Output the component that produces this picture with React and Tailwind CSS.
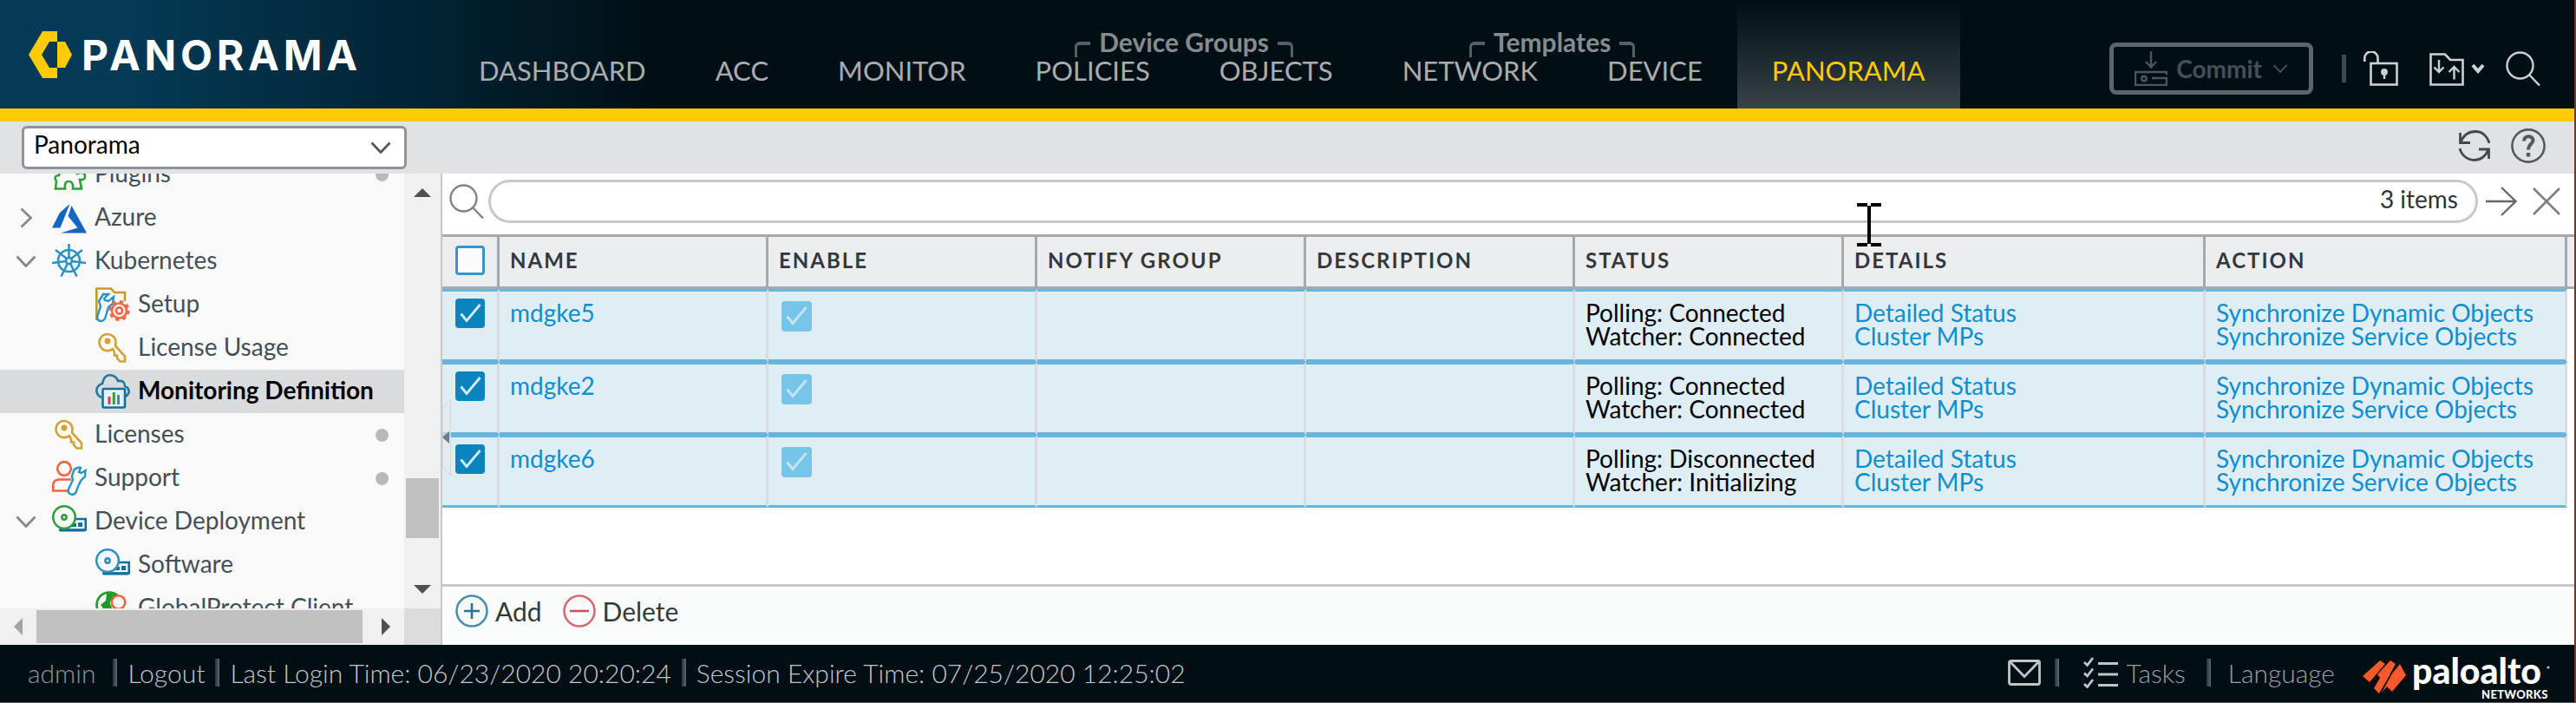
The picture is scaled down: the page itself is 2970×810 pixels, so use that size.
import React from "react";

/* ---------- icons: header ---------- */

function PanoramaMark() {
  return (
    <svg viewBox="0 0 50 56" className="h-14 w-[50px]" aria-hidden="true">
      <path d="M16 1H33V13H24L15 28L24 43H33V55H16L0 28Z" fill="#ffcb06" />
      <path d="M33 13H42L50 28L42 43H33Z" fill="#ffcb06" />
    </svg>
  );
}

function CommitIcon() {
  return (
    <svg viewBox="0 0 38 40" className="h-10 w-[38px]" fill="none" stroke="#4c575c" strokeWidth="2.4" aria-hidden="true">
      <path d="M19 0V18M13 12L19 18.500L25 12" />
      <path d="M37 27V24H1V39H37V31H20" />
      <circle cx="11" cy="31.500" r="2.800" />
    </svg>
  );
}

function UnlockIcon() {
  return (
    <svg viewBox="0 0 40 40" className="size-10" fill="none" stroke="#ccd1d3" strokeWidth="2.600" aria-hidden="true">
      <path d="M1.300 12V8A7.500 7.500 0 0 1 16.500 8V13" />
      <rect x="8.500" y="14" width="30" height="24.500" />
      <circle cx="24" cy="24" r="2.600" fill="#ccd1d3" />
      <path d="M24 25V32" strokeWidth="2.400" />
    </svg>
  );
}

function ConfigFolderIcon() {
  return (
    <svg viewBox="0 0 40 40" className="size-10" fill="none" stroke="#ccd1d3" strokeWidth="2.600" aria-hidden="true">
      <path d="M1.500 3.500H18L24 10H38.500V38.500H1.500Z" />
      <path d="M11 10V24M5.500 18.500L11 24L16.500 18.500M28.500 32.500V18M22.500 24L28.500 18L34.500 24" strokeWidth="2.400" />
    </svg>
  );
}

function SmallCaret() {
  return (
    <svg viewBox="0 0 16 12" className="h-3 w-4" fill="none" stroke="#ccd1d3" strokeWidth="4" aria-hidden="true">
      <path d="M2 2L8 9L14 2" />
    </svg>
  );
}

function SearchIcon({ light }) {
  return (
    <svg viewBox="0 0 40 40" className="size-10 shrink-0" fill="none" stroke={light ? "#ccd1d3" : "#7c858b"} strokeWidth="2.400" aria-hidden="true">
      <circle cx="16.500" cy="16.500" r="15" />
      <path d="M27 27L39 39.500" />
    </svg>
  );
}

function Chevron({ className, dir = "down" }) {
  const d = dir === "down" ? "M1.500 1.500L12 12.500L22.500 1.500" : "M1.500 1.500L12.500 12L1.500 22.500";
  return (
    <svg viewBox={dir === "down" ? "0 0 24 14" : "0 0 14 24"} className={className} fill="none" stroke="currentColor" strokeWidth="2.800" aria-hidden="true">
      <path d={d} />
    </svg>
  );
}

function RefreshIcon() {
  return (
    <svg viewBox="0 0 36 36" className="size-9" fill="none" stroke="#44484b" strokeWidth="2.800" aria-hidden="true">
      <path d="M1.500 3V14.500H13M2 13.500C6 4.500 13 1.500 19 1.500C27 1.500 33 7 35 15" />
      <path d="M34.500 33V22H23M34 23C30 31 24 34.500 18 34.500C10 34.500 3 29 1 21" />
    </svg>
  );
}

function HelpIcon() {
  return (
    <svg viewBox="0 0 40 40" className="size-10" fill="none" stroke="#55595c" aria-hidden="true">
      <circle cx="20" cy="20" r="18.600" strokeWidth="2.600" />
      <path d="M15 14.500C15 7.500 25.500 8 25.500 13.500C25.500 17.500 20 18 20 24.500" strokeWidth="4" />
      <path d="M20 28V32.500" strokeWidth="4.500" />
    </svg>
  );
}

/* ---------- icons: navigation tree ---------- */

function TreeSvg({ children }) {
  return (
    <svg viewBox="0 0 40 40" className="size-10 shrink-0" fill="none" strokeWidth="2.600" aria-hidden="true">
      {children}
    </svg>
  );
}

const Wrench = ({ x = 0, y = 0 }) => (
  <g transform={`translate(${x} ${y})`} stroke="#2b93c4" strokeWidth="2.400" fill="#f9f9f9">
    <path d="M8 1L3 9L5 15L1 27Q1 32 6 32Q10 31 11 26L14 16L19 12L20 4L14 9L10 8L9 6L14 1Z" />
  </g>
);

const DiscAndDevice = ({ color }) => (
  <>
    <path d="M8 29.500H38.700V17H27" stroke="#11719c" />
    <rect x="30" y="21" width="5" height="5" fill="#11719c" />
    <path d="M9 30H38" stroke="#11719c" strokeWidth="3" />
    <path d="M22 24H28" stroke="#11719c" strokeWidth="4" />
    <circle cx="14" cy="15" r="12.800" stroke={color} fill="#f9f9f9" />
    <circle cx="14" cy="15" r="2.600" stroke={color} />
  </>
);

const icons = {
  plugins: (
    <TreeSvg>
      <path d="M10 12H15Q13 4 19 4Q25 4 23 12H29V19Q38 16 38 22Q38 27 32 26L34 36.500H24Q25 28 19 28Q14 28 15 36.500H4L5 28Q1 22 8 21Z" stroke="#2ea03a" />
    </TreeSvg>
  ),
  azure: (
    <TreeSvg>
      <path d="M20.500 4L9 14L0 31.500H9.500Z" fill="#1565c5" />
      <path d="M22.500 6L18.500 18L29.500 31.500L10 37.500H40Z" fill="#1565c5" />
    </TreeSvg>
  ),
  kubernetes: (
    <TreeSvg>
      <g stroke="#2b93c4">
        <circle cx="19.500" cy="19.500" r="12.500" />
        <circle cx="19.500" cy="19.500" r="3.500" />
        <path d="M19.500 0V16M17 17L4 7M22 17L35 7M16 20L0 22M23 20L39 22M18 22.500L10.500 37.500M21 22.500L28.500 37.500" />
      </g>
    </TreeSvg>
  ),
  setup: (
    <TreeSvg>
      <path d="M1.300 38V1.500H18L22 6H34V16" stroke="#c9982b" />
      <Wrench x={1} y={7} />
      <circle cx="27.500" cy="27" r="10.600" stroke="#f0694a" strokeWidth="3" strokeDasharray="4.300 4.020" />
      <circle cx="27.500" cy="27" r="8.500" stroke="#f0694a" fill="#f9f9f9" />
      <circle cx="27.500" cy="27" r="3.600" stroke="#f0694a" />
    </TreeSvg>
  ),
  key: (
    <TreeSvg>
      <path d="M20.500 20.500A9.500 9.500 0 1 1 23.500 14L23 17.500L34 29.500V35.500H28.500L25 31.500V28.500H22V25.500L20 20.500" stroke="#d0a233" />
      <circle cx="14" cy="12" r="3.400" fill="#d0a233" />
      <path d="M12 14L16.500 10" stroke="#d0a233" />
    </TreeSvg>
  ),
  monitoring: (
    <TreeSvg>
      <path d="M7 27Q1 24 1.300 18Q3 12 8 11Q10 1 17 1.300Q24 2 26 8Q34 7 34 14Q39 16 38.700 21Q37 25 34 26" stroke="#1c7aa3" />
      <rect x="8.500" y="17" width="25.500" height="21.500" rx="1.500" stroke="#11719c" fill="#e8f0f4" />
      <path d="M16 26V35" stroke="#cf3f52" strokeWidth="3" />
      <path d="M21.300 21V35" stroke="#2ea03a" strokeWidth="3" />
      <path d="M26.500 24V35" stroke="#2b93c4" strokeWidth="3" />
    </TreeSvg>
  ),
  support: (
    <TreeSvg>
      <circle cx="14" cy="9" r="7.800" stroke="#f0623f" />
      <path d="M22 21.500H8Q1.300 22 1.300 28V34.500H20" stroke="#f0623f" />
      <path d="M25 11L23 18L24 22L18.500 34Q19 39 24 38.700Q28 38 29 32L33 23L38 18L38.500 11L34 14L31 13L33 8Q28 7 25 11Z" fill="#f9f9f9" stroke="#2b93c4" strokeWidth="2.400" />
    </TreeSvg>
  ),
  deployment: (
    <TreeSvg>
      <DiscAndDevice color="#2ea03a" />
    </TreeSvg>
  ),
  software: (
    <TreeSvg>
      <DiscAndDevice color="#2b93c4" />
    </TreeSvg>
  ),
  globalprotect: (
    <TreeSvg>
      <circle cx="16" cy="16" r="14.500" stroke="#1d9a2c" />
      <path d="M13 2L25 4L22 9L17 12V17L9 20L6 16L12 11Z" fill="#1d9a2c" />
      <path d="M8 18L18 16L20 24H10Z" fill="#1d9a2c" />
      <circle cx="26.500" cy="13" r="7.800" stroke="#f0623f" fill="#f9f9f9" />
    </TreeSvg>
  ),
};

const tree = [
  { label: "Plugins", icon: "plugins", dot: true },
  { label: "Azure", icon: "azure", arrow: "right" },
  { label: "Kubernetes", icon: "kubernetes", arrow: "down" },
  { label: "Setup", icon: "setup", child: true },
  { label: "License Usage", icon: "key", child: true },
  { label: "Monitoring Definition", icon: "monitoring", child: true, selected: true },
  { label: "Licenses", icon: "key", dot: true },
  { label: "Support", icon: "support", dot: true },
  { label: "Device Deployment", icon: "deployment", arrow: "down" },
  { label: "Software", icon: "software", child: true },
  { label: "GlobalProtect Client", icon: "globalprotect", child: true },
];

function TreeItem({ item }) {
  return (
    <li className={item.selected ? "bg-[#dadbdd]" : ""}>
      <a href="#" className="flex h-[50px] items-center pr-[18px] text-[28px] leading-[34px] whitespace-nowrap">
        <span className="flex w-[60px] shrink-0 justify-center text-[#85898c]">
          {item.arrow === "down" && <Chevron className="h-[14px] w-6" />}
          {item.arrow === "right" && <Chevron dir="right" className="h-6 w-[14px]" />}
        </span>
        {item.child && <span className="w-[50px] shrink-0" />}
        {icons[item.icon]}
        <span className={item.selected ? "pb-1 pl-[9px] font-bold text-black" : "pb-1 pl-[9px] text-[#454f58]"}>{item.label}</span>
        {item.dot && <span className="ml-auto size-[15px] rounded-full bg-[#b9b9b9]" />}
      </a>
    </li>
  );
}

function Sidebar() {
  return (
    <aside className="flex w-[510px] shrink-0 flex-col border-r-2 border-[#c5c9cc] bg-[#f0f0f0]">
      <div className="flex min-h-0 flex-1">
        <nav aria-label="Configuration" className="min-w-0 flex-1 overflow-hidden bg-[#f9f9f9]">
          <ul className="-mt-6">
            {tree.map((item) => (
              <TreeItem key={item.label} item={item} />
            ))}
          </ul>
        </nav>
        <div className="flex w-[42px] flex-col items-center justify-between py-[17px]">
          <svg viewBox="0 0 20 10" className="h-2.5 w-5" aria-hidden="true"><path d="M0 10L10 0L20 10Z" fill="#505050" /></svg>
          <div className="mt-auto mb-[54px] h-[69px] w-[38px] bg-[#c1c1c1]" />
          <svg viewBox="0 0 20 10" className="h-2.5 w-5" aria-hidden="true"><path d="M0 0L10 10L20 0Z" fill="#505050" /></svg>
        </div>
      </div>
      <div className="flex h-[42px]">
        <div className="flex min-w-0 flex-1 items-center px-4">
          <svg viewBox="0 0 10 20" className="h-5 w-2.5" aria-hidden="true"><path d="M10 0L0 10L10 20Z" fill="#a3a3a3" /></svg>
          <div className="ml-4 h-[38px] w-[376px] bg-[#c1c1c1]" />
          <svg viewBox="0 0 10 20" className="ml-auto h-5 w-2.5" aria-hidden="true"><path d="M0 0L10 10L0 20Z" fill="#505050" /></svg>
        </div>
        <div className="w-[42px] bg-[#dcdcdc]" />
      </div>
    </aside>
  );
}

/* ---------- header ---------- */

function Tab({ children, active }) {
  return (
    <a
      href="#"
      aria-current={active ? "page" : undefined}
      className={
        active
          ? "flex h-full items-end bg-linear-to-b from-[#010f15] to-[#3a4348] px-10 pb-6 text-[31px] leading-10 text-[#ffcb06]"
          : "flex h-full items-end px-10 pb-6 text-[31px] leading-10 text-[#a9adaf]"
      }
    >
      {children}
    </a>
  );
}

function TabGroup({ label, children }) {
  return (
    <div className="relative flex h-full">
      <div className="absolute inset-x-0 top-[30px] flex justify-center gap-2.5 text-[30px] leading-9 font-bold whitespace-nowrap text-[#858c90]">
        <span className="mt-[18px] h-[18px] w-[18px] rounded-tl-md border-t-4 border-l-3 border-[#566065]" />
        {label}
        <span className="mt-[18px] h-[18px] w-[18px] rounded-tr-md border-t-4 border-r-3 border-[#566065]" />
      </div>
      {children}
    </div>
  );
}

function Header() {
  return (
    <header className="flex h-[140px] shrink-0 border-b-15 border-[#ffcb06] bg-linear-to-r from-[#043a55] from-[150px] via-[#022233] via-[500px] to-[#010f15] to-[750px]">
      <div className="flex w-[512px] shrink-0 items-center gap-[10px] pl-[33px]">
        <PanoramaMark />
        <svg viewBox="0 0 340 56" className="h-14 w-[340px]" role="img" aria-label="Panorama">
          <text x="1" y="46" className="fill-white font-['Inter'] text-[48px] font-bold tracking-widest">PANORAMA</text>
        </svg>
      </div>
      <nav aria-label="Main" className="flex">
        <Tab>DASHBOARD</Tab>
        <Tab>ACC</Tab>
        <Tab>MONITOR</Tab>
        <TabGroup label="Device Groups">
          <Tab>POLICIES</Tab>
          <Tab>OBJECTS</Tab>
        </TabGroup>
        <TabGroup label="Templates">
          <Tab>NETWORK</Tab>
          <Tab>DEVICE</Tab>
        </TabGroup>
        <Tab active>PANORAMA</Tab>
      </nav>
      <div className="ml-auto flex items-end pr-[39px] pb-4">
        <div className="flex h-[60px] items-center">
          <button type="button" className="flex h-[60px] items-center rounded-lg border-5 border-[#5c666a] px-6 text-[28px] font-bold text-[#454f55]">
            <CommitIcon />
            <span className="pr-3 pl-2.5">Commit</span>
            <Chevron className="h-2.5 w-[18px]" />
          </button>
          <span className="mr-5 ml-[33px] h-8 w-[5px] bg-[#3f4a50]" />
          <button type="button" aria-label="Locks"><UnlockIcon /></button>
          <button type="button" aria-label="Configuration actions" className="ml-9 flex items-center gap-2">
            <ConfigFolderIcon />
            <SmallCaret />
          </button>
          <button type="button" aria-label="Search" className="ml-6"><SearchIcon light /></button>
        </div>
      </div>
    </header>
  );
}

function ContextBar() {
  return (
    <div className="flex h-[60px] shrink-0 items-center justify-between bg-[#e0e2e4] pr-[33px] pl-[25px]">
      <div className="grid">
        <select aria-label="Context" className="col-start-1 row-start-1 h-[50px] w-[444px] appearance-none rounded-md border-3 border-[#8f949b] bg-white pb-2 pl-[11px] text-[28px] leading-[34px] text-black">
          <option>Panorama</option>
        </select>
        <span className="pointer-events-none col-start-1 row-start-1 self-center justify-self-end pr-[18px] text-[#55595c]">
          <Chevron className="h-[14px] w-6" />
        </span>
      </div>
      <div className="flex items-center gap-6 pb-1">
        <button type="button" aria-label="Refresh"><RefreshIcon /></button>
        <button type="button" aria-label="Help"><HelpIcon /></button>
      </div>
    </div>
  );
}

/* ---------- grid ---------- */

const columns = ["NAME", "ENABLE", "NOTIFY GROUP", "DESCRIPTION", "STATUS", "DETAILS", "ACTION"];

const rows = [
  { name: "mdgke5", polling: "Connected", watcher: "Connected" },
  { name: "mdgke2", polling: "Connected", watcher: "Connected" },
  { name: "mdgke6", polling: "Disconnected", watcher: "Initializing" },
];

function Check({ label, muted, checked }) {
  return (
    <label className="grid w-fit">
      <input
        type="checkbox"
        aria-label={label}
        defaultChecked={checked}
        disabled={muted}
        className={
          muted
            ? "col-start-1 row-start-1 size-[35px] appearance-none rounded-sm bg-[#76c5e8]"
            : "col-start-1 row-start-1 size-[34px] appearance-none rounded-sm border-3 border-[#3696c5] bg-[#fbfbfb] checked:border-[#0a84bd] checked:bg-[#0a84bd]"
        }
      />
      {checked && (
        <svg viewBox="0 0 35 35" className="pointer-events-none col-start-1 row-start-1 size-[35px]" fill="none" stroke={muted ? "#c4e6f4" : "#d5ebf5"} strokeWidth="2.800" aria-hidden="true">
          <path d="M6.500 17.500L13 25.500L28.500 7" />
        </svg>
      )}
    </label>
  );
}

const cell = "h-[84px] border-y-3 border-r-3 border-y-[#68b5dc] border-r-[#d9dcde] bg-[#dfedf4] pt-[11px] pl-3 align-top whitespace-nowrap";

function Grid() {
  return (
    <table className="w-full table-fixed border-separate border-spacing-0 text-[28px] leading-[27px]">
      <colgroup>
        <col className="w-[66px]" />
        <col className="w-[310px]" />
        <col className="w-[310px]" />
        <col className="w-[310px]" />
        <col className="w-[310px]" />
        <col className="w-[310px]" />
        <col className="w-[417px]" />
        <col />
        <col className="w-2" />
      </colgroup>
      <thead>
        <tr className="h-[63px] bg-[#ecedee]">
          <th className="border-y-3 border-r-3 border-[#a4a9ad] pb-1 pl-[15px]">
            <Check label="Select all" />
          </th>
          {columns.map((c) => (
            <th key={c} scope="col" className="border-y-3 border-r-3 border-[#a4a9ad] pb-1 pl-3 text-left text-2xl font-bold tracking-[2px] text-[#33383d]">
              {c}
            </th>
          ))}
          <td className="border-y-3 border-[#a4a9ad]" />
        </tr>
      </thead>
      <tbody>
        {rows.map((r) => (
          <tr key={r.name}>
            <td className="h-[84px] border-y-3 border-r-3 border-y-[#68b5dc] border-r-[#d9dcde] bg-[#dfedf4] pt-2 pl-[15px] align-top">
              <Check label={`Select ${r.name}`} checked />
            </td>
            <td className={cell}><a href="#" className="text-[#0b8fd0]">{r.name}</a></td>
            <td className={cell}><div className="pl-[3px]"><Check label={`${r.name} enabled`} checked muted /></div></td>
            <td className={cell} />
            <td className={cell} />
            <td className={cell}>
              <div>Polling: {r.polling}</div>
              <div>Watcher: {r.watcher}</div>
            </td>
            <td className={cell}>
              <a href="#" className="block w-fit text-[#0b8fd0]">Detailed Status</a>
              <a href="#" className="block w-fit text-[#0b8fd0]">Cluster MPs</a>
            </td>
            <td className={cell}>
              <a href="#" className="block w-fit text-[#0b8fd0]">Synchronize Dynamic Objects</a>
              <a href="#" className="block w-fit text-[#0b8fd0]">Synchronize Service Objects</a>
            </td>
            <td />
          </tr>
        ))}
      </tbody>
    </table>
  );
}

function Content() {
  return (
    <main className="relative flex min-w-0 flex-1 flex-col bg-white">
      <div className="flex h-[70px] items-start gap-[5px] pt-[7px] pr-4 pl-2">
        <div className="flex h-[50px] items-center"><SearchIcon /></div>
        <div className="flex h-[50px] min-w-0 flex-1 items-center rounded-[25px] border-3 border-[#c5c9cc] bg-white pr-5 pl-5">
          <input type="text" aria-label="Filter" className="min-w-0 flex-1 text-[28px] outline-none" />
          <span className="pb-1.5 text-[28px] leading-8 text-[#2f3439]">3 items</span>
        </div>
        <div className="flex h-[50px] items-center gap-[18px] pl-1">
          <button type="button" aria-label="Apply filter">
            <svg viewBox="0 0 36 34" className="h-[34px] w-9" fill="none" stroke="#63686c" strokeWidth="2.400" aria-hidden="true">
              <path d="M0 17H34M18 1L34.500 17L18 33" />
            </svg>
          </button>
          <button type="button" aria-label="Clear filter">
            <svg viewBox="0 0 32 32" className="size-8" fill="none" stroke="#7b8084" strokeWidth="2.600" aria-hidden="true">
              <path d="M1 1L31 31M31 1L1 31" />
            </svg>
          </button>
        </div>
      </div>
      <div className="min-h-0 flex-1 overflow-hidden">
        <Grid />
      </div>
      <div className="flex h-[70px] items-start gap-6 border-t-3 border-[#c5c9cc] bg-[#fafcfc] pt-[9px] pl-[15px] text-[30px] leading-9 text-[#33383b]">
        <button type="button" className="flex items-center gap-2">
          <svg viewBox="0 0 38 38" className="size-[38px]" fill="none" stroke="#4a8fb0" strokeWidth="2.600" aria-hidden="true">
            <circle cx="19" cy="19" r="17.500" />
            <path d="M19 10V28M10 19H28" stroke="#22749c" />
          </svg>
          Add
        </button>
        <button type="button" className="flex items-center gap-2">
          <svg viewBox="0 0 38 38" className="size-[38px]" fill="none" stroke="#d86a6e" strokeWidth="2.600" aria-hidden="true">
            <circle cx="19" cy="19" r="17.500" />
            <path d="M8 19H30" stroke="#cf5358" />
          </svg>
          Delete
        </button>
      </div>

      {/* sidebar collapse handle */}
      <button type="button" aria-label="Collapse sidebar" className="absolute top-[260px] left-0">
        <svg viewBox="0 0 10 88" className="h-[88px] w-2.5" aria-hidden="true">
          <path d="M0 10L9.500 0V88L0 78Z" fill="#e8eaea" fillOpacity="0.600" stroke="#d3d7d8" />
          <path d="M8 37L0 44L8 51Z" fill="#6c7b84" />
        </svg>
      </button>

      {/* text cursor */}
      <svg viewBox="0 0 28 50" className="pointer-events-none absolute top-[34px] left-[1631px] h-[50px] w-7" fill="none" stroke="#000" strokeWidth="4" aria-hidden="true">
        <path d="M0 2H12M16 2H28M14 3V47M0 48H12M16 48H28" />
      </svg>
    </main>
  );
}

/* ---------- footer ---------- */

const Divider = () => <span className="h-8 w-[5px] bg-linear-to-r from-[#28343a] to-[#5f696e]" />;

function Footer() {
  return (
    <footer className="flex h-[66px] shrink-0 items-center justify-between bg-[#010f15] pr-6 pb-0.5 pl-8 text-[30px] leading-9 font-light whitespace-nowrap text-[#c3c7c9]">
      <div className="flex items-center gap-3">
        <span className="pr-2 text-[#8f9598]">admin</span>
        <Divider />
        <a href="#">Logout</a>
        <Divider />
        <span>Last Login Time: 06/23/2020 20:20:24</span>
        <Divider />
        <span>Session Expire Time: 07/25/2020 12:25:02</span>
      </div>
      <div className="flex items-center text-[#9a9fa3]">
        <button type="button" aria-label="Messages" className="mr-4">
          <svg viewBox="0 0 38 30" className="h-[30px] w-[38px]" fill="none" stroke="#c0c5c7" strokeWidth="2.800" aria-hidden="true">
            <rect x="1.500" y="1.500" width="35" height="27" rx="2" />
            <path d="M3 3L19 19.500L35 3" />
          </svg>
        </button>
        <Divider />
        <button type="button" className="mr-6 ml-7 flex items-center gap-2.5">
          <svg viewBox="0 0 40 36" className="h-9 w-10" fill="none" stroke="#c0c5c7" strokeWidth="2.800" aria-hidden="true">
            <path d="M17 7.500H40M17 20H40M17 32.500H40" />
            <path d="M1 6L4.500 9.500L11 1M1 18.500L4.500 22L11 13.500M1 31L4.500 34.500L11 26" />
          </svg>
          Tasks
        </button>
        <Divider />
        <a href="#" className="mr-8 ml-5">Language</a>
        <svg viewBox="0 0 220 62" className="h-[62px] w-[220px]" role="img" aria-label="Palo Alto Networks">
          <g fill="#fa582d" transform="translate(0 17)">
            <path d="M20 0L26 4L8 25L0 18Z" />
            <path d="M32 0L38 4L32 15L29 21L19 38L13 32L20 20L17 16Z" />
            <path d="M43 4L50 17L34 36L28 30L22 37L34 15Z" />
          </g>
          <text x="57" y="44" className="fill-white font-['Lato'] text-[41px] font-black">paloalto</text>
          <text x="137" y="61" className="fill-white font-['Lato'] text-[13px] font-black tracking-wide">NETWORKS</text>
          <circle cx="214" cy="25" r="1.500" fill="#c0c5c7" />
        </svg>
      </div>
    </footer>
  );
}

export default function App() {
  return (
    <div className="flex h-screen flex-col border-r-2 border-b border-r-[#6e392d] border-b-[#6b5550] bg-white font-['Lato','Liberation_Sans',sans-serif] text-black">
      <Header />
      <ContextBar />
      <div className="flex min-h-0 flex-1">
        <Sidebar />
        <Content />
      </div>
      <Footer />
    </div>
  );
}
